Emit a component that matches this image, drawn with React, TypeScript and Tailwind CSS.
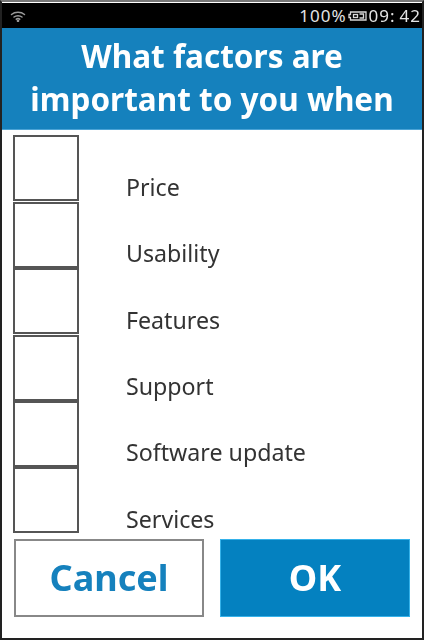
import React from 'react';

const options = ['Price', 'Usability', 'Features', 'Support', 'Software update', 'Services'];

const App: React.FC = () => {
  return (
    <div className="w-[424px] h-[640px] bg-white border-2 border-[#222] border-t-[#777] flex flex-col font-['Noto_Sans',sans-serif] overflow-hidden">
      <div className="blur-[0.5px] flex flex-col">
        {/* status bar */}
        <div className="h-[25px] mt-px bg-black flex items-center justify-between pl-[8px] pr-[1px] text-[#e4e4e4] shrink-0">
          <svg width="16" height="12" viewBox="0 0 16 12" fill="none" stroke="#9a9a9a" strokeWidth="1.5" strokeLinecap="round">
            <path d="M1.5 4.5C5 1.5 11 1.5 14.5 4.5" />
            <path d="M4 7C6.2 5.2 9.8 5.2 12 7" />
            <path d="M6.3 9.2C7.3 8.4 8.7 8.4 9.7 9.2" />
            <circle cx="8" cy="10.8" r="0.6" fill="#9a9a9a" />
          </svg>
          <div className="flex items-center text-[17px] leading-none tracking-[1px]">
            <span>100%</span>
            <svg width="19" height="10" viewBox="0 0 19 10" fill="none" stroke="#d8d8d8" strokeWidth="1.3" className="ml-[1px] mr-[2px]">
              <path d="M2.5 1H18V9H2.5V6.5H1V3.5H2.5Z" />
              <rect x="5.5" y="3.5" width="4" height="3" />
              <path d="M11.5 3H15.5V7H11.5" />
            </svg>
            <span>09:</span>
            <span className="ml-[4px]">42</span>
          </div>
        </div>

        {/* title */}
        <div className="h-[102px] pb-[3px] bg-[#1581bd] border-b border-[#4aa3d6] shrink-0 flex flex-col items-center justify-center text-white text-[31.5px] leading-[43px] font-bold">
          <span>What factors are</span>
          <span>important to you when</span>
        </div>

        {/* options */}
        <div className="flex flex-col pl-[11px] pt-[5px] shrink-0">
          {options.map((label) => (
            <div key={label} className="flex items-end h-[66.4px]">
              <div className="w-[66px] h-[66px] border-2 border-[#555] bg-white shrink-0" />
              <span className="ml-[47px] text-[#333] text-[23.2px] leading-[31px] mb-[-1.5px]">{label}</span>
            </div>
          ))}
        </div>

        {/* buttons */}
        <div className="flex gap-[16px] pl-[12px] mt-[6px]">
          <button className="w-[190px] h-[78px] bg-white border-2 border-[#888] text-[#1581bd] text-[36px] font-bold">Cancel</button>
          <button className="w-[190px] h-[78px] bg-[#0481c0] border border-[#35b2ea] text-white text-[36px] font-bold">OK</button>
        </div>
      </div>
    </div>
  );
};

export default App;
